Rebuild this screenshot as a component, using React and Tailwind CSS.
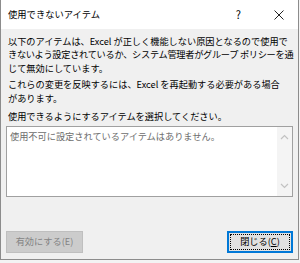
const font = { fontFamily: '"Noto Sans CJK JP", "Noto Sans", sans-serif' };

const Chevron = ({ up }) => (
  <svg width="9" height="6" viewBox="0 0 9 6" className="block">
    <path
      d={up ? 'M1 5 L4.5 1.5 L8 5' : 'M1 1 L4.5 4.5 L8 1'}
      fill="none"
      stroke="#c2c2c2"
      strokeWidth="1.2"
    />
  </svg>
);

export default function App() {
  return (
    <div className="w-[300px] h-[263px] bg-[#f3f3f3] text-black" style={font}>
      <div className="w-[299px] h-[260px] flex flex-col bg-[#f0f0f0] border-l border-r border-b border-[#8c8c8c]">
        {/* Title bar */}
        <div className="h-[29px] shrink-0 bg-white flex items-center pl-[7px] pr-[14px]">
          <span className="text-[9.3px] leading-none">使用できないアイテム</span>
          <span className="ml-auto text-[11px] leading-none mr-[33px]">?</span>
          <svg width="10" height="10" viewBox="0 0 10 10">
            <path d="M0.5 0.5 L9.5 9.5 M9.5 0.5 L0.5 9.5" stroke="#222" strokeWidth="1" />
          </svg>
        </div>

        {/* Body */}
        <div className="flex-1 flex flex-col px-[5px] pt-[6px] text-[9.2px] leading-[13.4px]">
          <div className="pl-[2px] whitespace-nowrap">
            <div>以下のアイテムは、Excel が正しく機能しない原因となるので使用で</div>
            <div className="tracking-[-0.28px]">きないよう設定されているか、システム管理者がグループ ポリシーを通</div>
            <div>じて無効にしています。</div>
          </div>
          <div className="pl-[2px] mt-[3px] whitespace-nowrap">
            <div>これらの変更を反映するには、Excel を再起動する必要がある場合</div>
            <div>があります。</div>
          </div>
          <p className="pl-[2px] mt-[5px] whitespace-nowrap">使用できるようにするアイテムを選択してください。</p>

          {/* List box */}
          <div className="mt-[3px] h-[71px] w-[287px] border border-[#a0a0a0] bg-white flex">
            <div className="flex-1 pl-[3px] pt-[3px] text-[#6d6d6d]">使用不可に設定されているアイテムはありません。</div>
            <div className="w-[15px] bg-[#f4f4f4] flex flex-col items-center justify-between py-[7px]">
              <Chevron up />
              <Chevron />
            </div>
          </div>

          {/* Buttons */}
          <div className="mt-auto mb-[6px] flex justify-between w-[287px]">
            <div className="h-[22px] w-[77px] bg-[#cccccc] border border-[#bfbfbf] text-[#838383] flex items-center justify-center">
              有効にする(E)
            </div>
            <div className="h-[22px] w-[66px] bg-[#e1e1e1] border-2 border-[#0078d7] p-[1px]">
              <div className="h-full w-full border border-dotted border-black flex items-center justify-center">
                閉じる(<span className="underline">C</span>)
              </div>
            </div>
          </div>
        </div>
      </div>
    </div>
  );
}
